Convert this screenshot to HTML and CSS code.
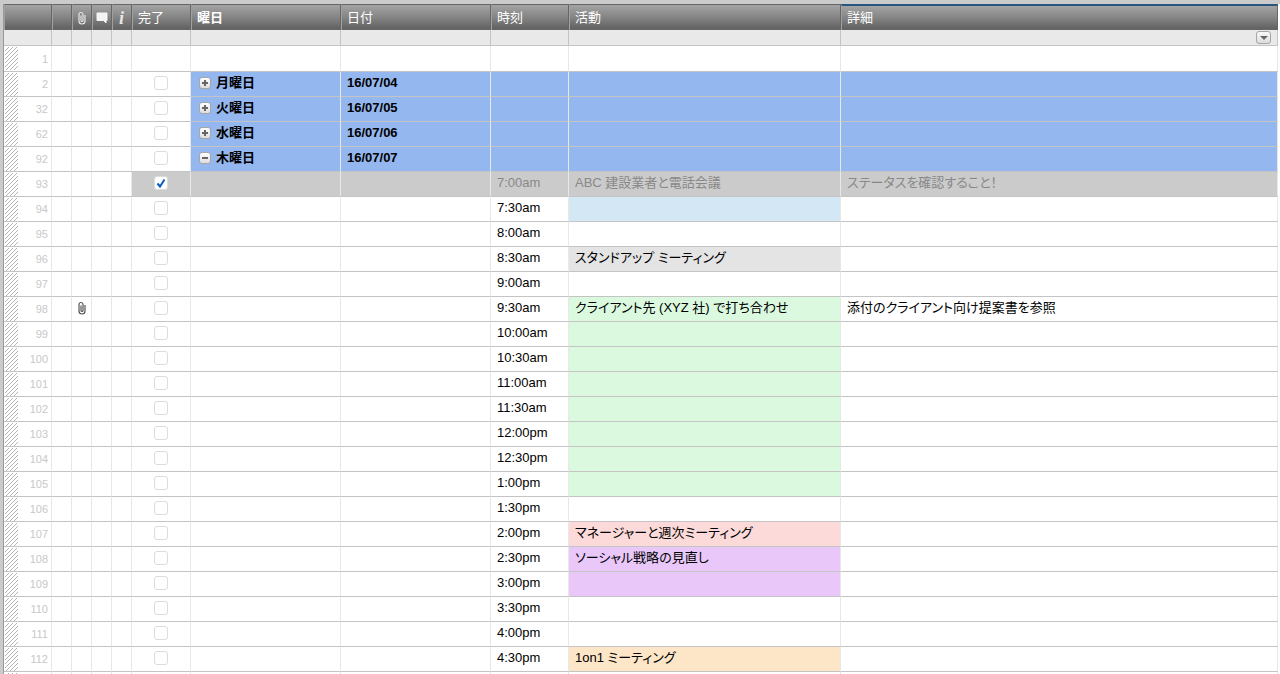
FILE: index.html
```html
<!DOCTYPE html>
<html lang="ja">
<head>
<meta charset="utf-8">
<title>週間スケジュール</title>
<link rel="stylesheet" href="styles.css">
</head>
<body>
<main class="sheet">
<svg class="defs" aria-hidden="true">
  <symbol id="clip" viewBox="0 0 10 14"><path d="M4 4.500V9.500a1 1 0 0 0 2 0V3.500a2 2 0 0 0-4 0V10a3 3 0 0 0 6 0V4" fill="none" stroke="currentColor" stroke-width="1.200"/></symbol>
  <symbol id="bubble" viewBox="0 0 12 12"><path d="M1 1h10v7.500H10V11L7.500 8.500H1z" fill="currentColor" stroke="currentColor" stroke-linejoin="round"/></symbol>
</svg>
<table class="grid">
  <colgroup><col class="c-num"><col class="c-icon"><col class="c-icon"><col class="c-icon"><col class="c-icon"><col class="c-done"><col class="c-day"><col class="c-day"><col class="c-time"><col class="c-act"><col></colgroup>
  <thead>
    <tr class="head">
      <th></th><th></th>
      <th class="icon"><svg class="clip" role="img" aria-label="添付"><use href="#clip"/></svg></th>
      <th class="icon"><svg class="bubble" role="img" aria-label="コメント"><use href="#bubble"/></svg></th>
      <th class="icon info">i</th>
      <th>完了</th><th class="primary">曜日</th><th>日付</th><th>時刻</th><th>活動</th><th class="active">詳細</th>
    </tr>
    <tr class="filter"><td></td><td></td><td></td><td></td><td></td><td></td><td></td><td></td><td></td><td></td><td class="menu-cell"><button class="menu" aria-label="列メニュー"></button></td></tr>
  </thead>
  <tbody id="rows"></tbody>
</table>
</main>
<script src="rows.js"></script>
</body>
</html>
```

FILE: styles.css
```css
html, body { height: 100%; }
body {
  margin: 0;
  overflow: hidden;
  background: #cbcbcb;
  color: #000;
  font: 13px/22px "Liberation Sans", "Noto Sans CJK JP", sans-serif;
  font-feature-settings: "palt";
}
.sheet { padding: 4px 0 0 3px; }
.defs { display: none; }
.grid {
  width: 100%;
  table-layout: fixed;
  border-collapse: separate;
  border-spacing: 0;
  border-left: 1px solid #999;
  background: #fff;
  padding-right: 2px;
}
.c-num { width: 48px; }
.c-icon { width: 20px; }
.c-done { width: 59px; }
.c-day { width: 150px; }
.c-time { width: 78px; }
.c-act { width: 272px; }
.grid th, .grid td { box-sizing: border-box; padding: 0 6px; text-align: left; white-space: nowrap; }
.grid .head th {
  height: 26px;
  padding-left: 5px;
  border-top: 1px solid #666;
  border-right: 1px solid #666;
  border-left: 1px solid #a0a0a0;
  background: linear-gradient(#a4a4a4, #848484 50%, #656565 90%);
  color: #fff;
  font-weight: normal;
}
.grid .head .primary { font-weight: bold; }
.grid .head .active { border-top: 2px solid #28557f; }
.grid .head .icon { padding: 0 1px 0 0; color: #e6e6e6; text-align: center; }
.grid .head .info { font: italic bold 18px/22px "Liberation Serif", serif; }
.grid svg { display: block; margin: 0 auto; }
.clip { width: 10px; height: 14px; }
.bubble { width: 12px; height: 12px; color: #f4f4f4; }
.grid .filter td { height: 16px; border-right: 1px solid #c4c4c4; border-bottom: 1px solid #c4c4c4; background: #e9e9e9; }
.grid .filter .menu-cell { padding: 0 6px; }
.menu {
  display: flex;
  align-items: center;
  justify-content: center;
  box-sizing: border-box;
  width: 15px;
  height: 13px;
  margin: 0 0 0 auto;
  padding: 0;
  border: 1px solid #a6a6a6;
  border-radius: 3px;
  background: linear-gradient(#f8f8f8, #dcdcdc);
}
.menu::before { content: ""; border: 4px solid transparent; border-top-color: #666; border-bottom: 0; }
.grid .row td { height: 25px; padding-bottom: 2px; border-right: 1px solid #e8e8e8; border-bottom: 1px solid #c4c4c4; }
.grid .row:first-child td { height: 26px; }
.grid .row .num { padding: 0 3px 0 1px; color: #c8c8c8; font-size: 11px; }
.num-box { display: flex; align-items: center; justify-content: space-between; }
.hatch {
  width: 13px;
  height: 23px;
  background: url("data:image/svg+xml,%3Csvg xmlns='http://www.w3.org/2000/svg' width='4' height='4' shape-rendering='crispEdges'%3E%3Cpath d='M3 0h1v1H3zM2 1h1v1H2zM1 2h1v1H1zM0 3h1v1H0z' fill='%23b4b4b4'/%3E%3C/svg%3E");
}
.row .clip { color: #555; }
.grid .row .slot { padding: 0 0 2px; }
.check { display: block; appearance: none; box-sizing: border-box; width: 14px; height: 14px; margin: 0 auto; border: 1px solid #dcdcdc; border-radius: 3px; background: #fff; }
.check:checked { background: #fff url("data:image/svg+xml,%3Csvg xmlns='http://www.w3.org/2000/svg' viewBox='0 0 12 12'%3E%3Cpath d='M2.500 6.500L5 9.500L9.500 2.500' fill='none' stroke='%230b5cc0' stroke-width='2'/%3E%3C/svg%3E"); }
.day td:nth-child(n+7) { background: #95b7ef; font-weight: bold; }
.day-box { display: flex; align-items: center; gap: 5px; padding-left: 2px; }
.toggle { position: relative; box-sizing: border-box; width: 12px; height: 12px; padding: 0; border: 1px solid #a6a6a6; border-radius: 3px; background: linear-gradient(#fff, #ddd); }
.toggle::before, .toggle.plus::after { content: ""; position: absolute; top: 4px; left: 2px; width: 6px; height: 2px; background: #666; }
.toggle.plus::after { transform: rotate(90deg); }
.done td:nth-child(n+6) { background: #cbcbcb; color: #888; }
.blue { background: #d4e7f5; }
.gray { background: #e4e4e4; }
.green { background: #dbf9df; }
.red { background: #fbdad9; }
.purple { background: #e9c8f9; }
.orange { background: #fde5c7; }
```

FILE: rows.js
```js
const rows = [
  { n: 1, blank: true },
  { n: 2, day: "月曜日", date: "16/07/04" },
  { n: 32, day: "火曜日", date: "16/07/05" },
  { n: 62, day: "水曜日", date: "16/07/06" },
  { n: 92, day: "木曜日", date: "16/07/07", open: true },
  { n: 93, time: "7:00am", act: "ABC 建設業者と電話会議", note: "ステータスを確認すること！", done: true },
  { n: 94, time: "7:30am", color: "blue" },
  { n: 95, time: "8:00am" },
  { n: 96, time: "8:30am", act: "スタンドアップ ミーティング", color: "gray" },
  { n: 97, time: "9:00am" },
  { n: 98, time: "9:30am", act: "クライアント先 (XYZ 社) で打ち合わせ", note: "添付のクライアント向け提案書を参照", color: "green", clip: true },
  { n: 99, time: "10:00am", color: "green" },
  { n: 100, time: "10:30am", color: "green" },
  { n: 101, time: "11:00am", color: "green" },
  { n: 102, time: "11:30am", color: "green" },
  { n: 103, time: "12:00pm", color: "green" },
  { n: 104, time: "12:30pm", color: "green" },
  { n: 105, time: "1:00pm", color: "green" },
  { n: 106, time: "1:30pm" },
  { n: 107, time: "2:00pm", act: "マネージャーと週次ミーティング", color: "red" },
  { n: 108, time: "2:30pm", act: "ソーシャル戦略の見直し", color: "purple" },
  { n: 109, time: "3:00pm", color: "purple" },
  { n: 110, time: "3:30pm" },
  { n: 111, time: "4:00pm" },
  { n: 112, time: "4:30pm", act: "1on1 ミーティング", color: "orange" },
  { n: "", blank: true }
];

document.getElementById("rows").innerHTML = rows.map(r => {
  const kind = r.day ? "day" : r.done ? "done" : "";
  const clip = r.clip ? '<svg class="clip" role="img" aria-label="添付あり"><use href="#clip"/></svg>' : "";
  const check = r.blank ? "" : `<input class="check" type="checkbox" aria-label="${r.n} 行 完了"${r.done ? " checked" : ""}>`;
  const day = r.day ? `<div class="day-box"><button class="toggle ${r.open ? "minus" : "plus"}" aria-label="${r.day}を${r.open ? "折りたたむ" : "展開"}"></button>${r.day}</div>` : "";
  return `<tr class="row ${kind}">
    <td class="num"><div class="num-box"><span class="hatch"></span>${r.n}</div></td>
    <td></td><td class="slot">${clip}</td><td></td><td></td>
    <td class="slot">${check}</td><td>${day}</td><td>${r.date || ""}</td>
    <td>${r.time || ""}</td><td class="${r.color || ""}">${r.act || ""}</td><td>${r.note || ""}</td>
  </tr>`;
}).join("");
```
